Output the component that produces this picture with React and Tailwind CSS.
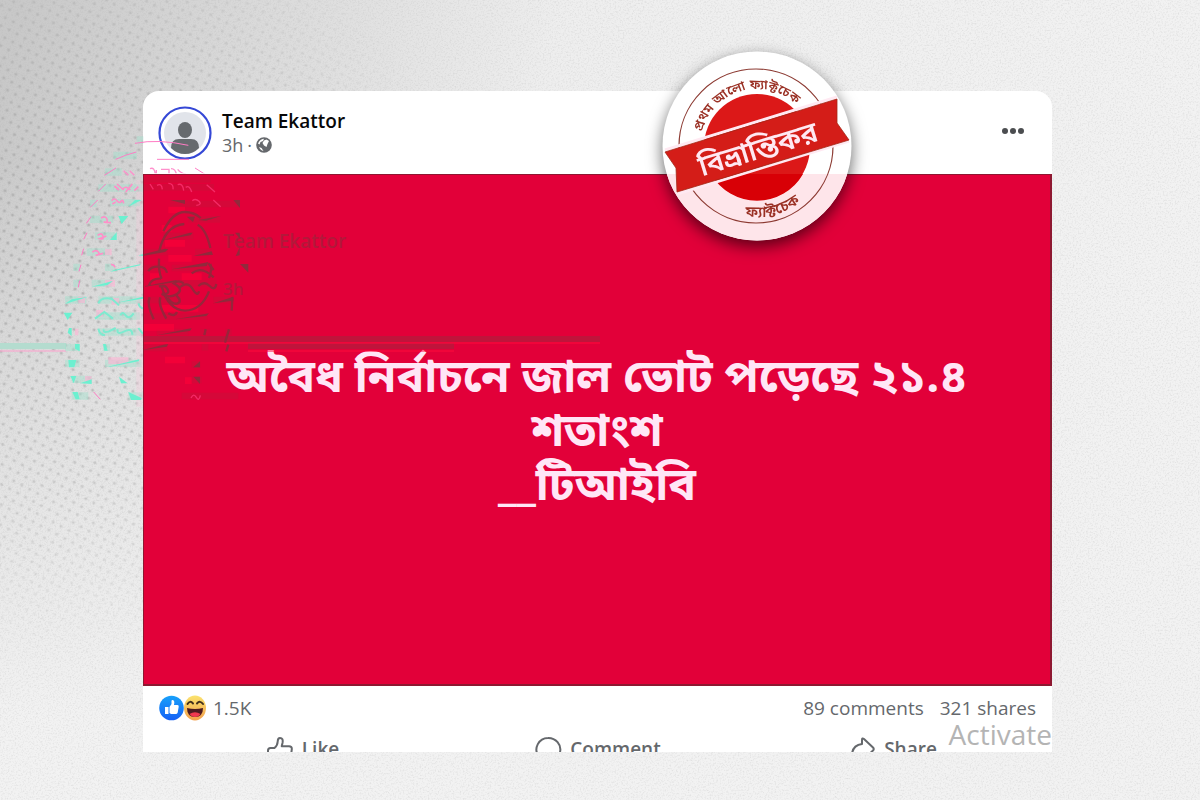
import React from "react";

const RED = "#e20039";

const ACTIONS = [
  { label: "Like", icon: LikeIcon },
  { label: "Comment", icon: CommentIcon },
  { label: "Share", icon: ShareIcon },
];

// slanted ribbon pieces left over from the shifted stamp, as filled wedges
const WEDGES = [
  "M325 330l80-22h8l-6 8-80 14z",
  "M250 376l80-20 10 2-10 8-68 12z",
  "M165 426l12-6 80-18-2 4z",
  "M415 378l55-14 4 10-22 2z",
  "M350 418l100-20 10-2-5 12z",
  "M270 468l95-18-3 6-92 14z",
  "M110 470l65-18-18 14z",
  "M475 520l60-20v12z",
  "M185 518l80-18v6z",
  "M30 522l20-14 50-8z",
  "M360 568l90-16 12-2-8 8z",
  "M305 616l95-20 10-1-5 8z",
  "M265 660l60-16 15-2-5 8z",
  "M158 712l10-4 85-20-2 6z",
  "M75 760l35-12v14z",
  "M220 230l20-20h20z",
  "M430 270l68-12-45 14z",
  "M345 210h45v12z",
  "M535 210h20v24z",
  "M395 260h25l-6 16z",
  "M555 402h25v26z",
  "M415 712l20-18v18z",
  "M415 740h20v22z",
  "M190 258h30l-20 24z",
  "M165 330l20-24v24z",
  "M540 308h14l2 20zM542 378l12-26v24z",
  "M26 548h26l-14 22zM42 594h8v24l-12-10zM60 642h14v22l-14-8zM40 690h24l-6 22H42zM46 738h18l-8 22zM52 786h16l6 22H62z",
  "M150 402l8 22M144 642h8l6 20h-10zM220 786l40 18-2 6h-30zM192 740l26 20h-20z",
];

const CURLS = [
  "M325 304q28-58 64-58 28 0 48 18M312 366q18-80 76-84M428 284q26 14 38 70",
  "M312 386q-2 40 8 60M320 470q20 70 70 72 50-2 72-58M466 402q6 16-4 42",
  "M280 424q6-14 30-14 22 0 26 18M282 466q8-22 36-20M410 430q30-24 66 12M460 400l16 20",
  "M312 470q18-8 26 8t-18 14q24 14 46 0t-10-32q14-12 30 0M370 476q26-26 42 0t20 8M430 468q18-16 34 0t20-6",
  "M284 502q-10 20 12 66M316 502q-8 20 18 64M338 504q16 22 30 16t-4-24M340 550q20 12 26-4",
  "M522 598l-12 40M532 502l-2 40M452 598l-4 18M520 644l-6 20",
];

const SCRIPT_BITS = [
  "M170 212q8-10 16 0t12 2q6-8 8 6M172 222l10-6",
  "M138 264q14-8 18 4t-10 8l22 2",
  "M128 316q12-10 16 2t-10 8l20-8",
  "M112 366q12-8 18 0t-8 10l22-6",
  "M168 404q8-2 12 8",
  "M178 168l14 12M186 162l20 18M204 176q10-10 22 4",
  "M212 186l20-24M238 182l12-12",
];

const MINT_CURLS = [
  "M130 520q8-20 40-14l22 20",
  "M120 566l28-20 26 20M130 596q4 18 20 20M146 598q-2 12 16 6l20-10M188 598q-4 18 20 6t24 10",
  "M196 556q6-14 16 0t24-6M250 520q4 12 14 16M250 594l14 18",
];

function LikeIcon() {
  return (
    <svg viewBox="0 0 28 28" className="h-7 w-7" fill="none" stroke="#65686c" strokeWidth="2" strokeLinejoin="round">
      <path d="M2 15.5q0-2.5 2.500-2.500h4q3-2.500 3.200-6.500.1-3.500 2.300-3.500 3.500 0 2.500 5l-.8 3.200h7.300q3 0 2.800 3l-1 8q-.5 3.800-4 3.800H12q-2.500 0-4.500-1H5q-3 0-3-3z" />
    </svg>
  );
}

function CommentIcon() {
  return (
    <svg viewBox="0 0 28 28" className="h-7 w-7" fill="none" stroke="#65686c" strokeWidth="2" strokeLinejoin="round">
      <path d="M14 3a12 11.500 0 1 1-5 21.800L3 26l1.500-5A11.500 11.500 0 0 1 14 3z" />
    </svg>
  );
}

function ShareIcon() {
  return (
    <svg viewBox="0 0 28 28" className="h-7 w-7" fill="none" stroke="#65686c" strokeWidth="2" strokeLinejoin="round">
      <path d="M14 9V5q0-2.500 2-1l9 8.500q1.500 1.500 0 3l-9 8.500q-2 1.500-2-1v-4q-6 0-10 4Q3 10.500 14 9z" />
    </svg>
  );
}

function Backdrop() {
  return (
    <svg className="absolute inset-0 h-full w-full" aria-hidden="true">
      <defs>
        <linearGradient id="base" x1="0" y1="0.1" x2="1" y2="0.25">
          <stop offset="0" stopColor="#c8c8c8" />
          <stop offset="0.2" stopColor="#dadada" />
          <stop offset="0.45" stopColor="#eeeeee" />
          <stop offset="1" stopColor="#f2f2f2" />
        </linearGradient>
        <linearGradient id="lift" x1="0" y1="0" x2="0" y2="1">
          <stop offset="0.2" stopColor="#f2f2f2" stopOpacity="0" />
          <stop offset="0.9" stopColor="#f2f2f2" stopOpacity="1" />
        </linearGradient>
        <pattern id="dots" width="9" height="9" patternUnits="userSpaceOnUse" patternTransform="rotate(28)">
          <circle cx="4" cy="4" r="1.600" fill="#8c8c8c" />
        </pattern>
        <radialGradient id="fade" gradientUnits="userSpaceOnUse" cx="70" cy="270" r="400">
          <stop offset="0" stopColor="#fff" stopOpacity="0.5" />
          <stop offset="0.6" stopColor="#fff" stopOpacity="0.26" />
          <stop offset="1" stopColor="#fff" stopOpacity="0" />
        </radialGradient>
        <mask id="dotMask">
          <rect width="100%" height="100%" fill="url(#fade)" />
        </mask>
        <filter id="grain" x="0" y="0" width="100%" height="100%">
          <feTurbulence type="fractalNoise" baseFrequency="0.6" numOctaves="2" />
          <feColorMatrix values="0 0 0 0 0.4  0 0 0 0 0.4  0 0 0 0 0.4  1.4 0 0 0 -0.64" />
        </filter>
      </defs>
      <rect width="100%" height="100%" fill="url(#base)" />
      <rect width="100%" height="100%" fill="url(#lift)" />
      <rect width="100%" height="100%" fill="url(#dots)" mask="url(#dotMask)" />
      <rect width="100%" height="100%" filter="url(#grain)" opacity="0.4" />
    </svg>
  );
}

function Avatar() {
  return (
    <svg viewBox="0 0 54 54" className="h-[54px] w-[54px] shrink-0" aria-hidden="true">
      <circle cx="27" cy="27" r="25.500" fill="#fff" stroke="#3548d6" strokeWidth="2.200" />
      <circle cx="27" cy="27" r="21" fill="#e1e4ea" />
      <ellipse cx="27" cy="24" rx="7" ry="8" fill="#666a6e" />
      <path d="M13 42q0-9 8-9h12q8 0 8 9-6 6-14 6t-14-6z" fill="#666a6e" />
    </svg>
  );
}

function Globe() {
  return (
    <svg viewBox="0 0 16 16" className="h-4 w-4" aria-label="Public">
      <circle cx="8" cy="8" r="7.800" fill="#65686c" />
      <path d="M2 6.500Q3.500 2.500 8 1.800L7 4l-2.500 1-1 2.500zM8 3.500l2.500-1L13 4l-1.500 3-1 3L8 8.500 6.500 6zM3 10l2.500 1 2 3Q4.500 13.500 3 10z" fill="#fff" />
    </svg>
  );
}

function Reactions() {
  return (
    <svg viewBox="0 0 48 26" className="h-[26px] w-12" aria-hidden="true">
      <defs>
        <linearGradient id="blue" x1="0" y1="0" x2="0" y2="1">
          <stop offset="0" stopColor="#18a1fa" />
          <stop offset="1" stopColor="#1560f5" />
        </linearGradient>
        <linearGradient id="yellow" x1="0" y1="0" x2="0" y2="1">
          <stop offset="0" stopColor="#fbe36e" />
          <stop offset="1" stopColor="#f3a04c" />
        </linearGradient>
      </defs>
      <ellipse cx="36" cy="13" rx="11" ry="12.500" fill="url(#yellow)" />
      <path d="M28.500 9q2.500-4 5.500-.5M38 8.500q3-3.500 6 .5" fill="none" stroke="#43301c" strokeWidth="2" strokeLinecap="round" />
      <path d="M28 13q8 2 16 0 0 9-8 9t-8-9z" fill="#4b1a20" />
      <path d="M30.500 19q5.500-3.500 11 0-2 3-5.500 3t-5.500-3z" fill="#f0384f" />
      <circle cx="12.500" cy="13" r="12.300" fill="url(#blue)" />
      <path d="M6 12h3.500v7H6zM10.500 12l2-3V6q0-1.200 1.300-1Q16 5.500 15 10h3.500q1.500.3 1.200 1.800l-1 5.700q-.4 1.500-2 1.500h-4.700l-1.500-1z" fill="#fff" />
    </svg>
  );
}

function Stamp() {
  return (
    <svg
      viewBox="0 0 190 190"
      className="absolute -top-10 right-[200px] h-[190px] w-[190px] overflow-visible drop-shadow-[0_6px_8px_rgba(0,0,0,0.6)]"
      fontFamily="'Noto Sans Bengali', 'Noto Sans', sans-serif"
    >
      <defs>
        <path id="arcTop" d="M38 95a57 57 0 0 1 114 0" />
        <path id="arcBottom" d="M25 96a70 70 0 0 0 140 0" />
        <clipPath id="disc">
          <circle cx="95" cy="95" r="94.500" />
        </clipPath>
      </defs>
      <g clipPath="url(#disc)">
        <rect width="190" height="190" fill="#fff" />
        <rect y="123" width="190" height="67" fill="#fee5ea" />
      </g>
      <circle cx="94" cy="95" r="77" fill="none" stroke="#8c3a32" strokeWidth="1.200" />
      <circle cx="95" cy="96" r="53" fill="#dc1818" />
      <path d="M49 123h92a53 53 0 0 1-92 0z" fill="#d80006" />
      <path d="M3 99 175 46M15 143l172-53" fill="none" stroke="#ffe9f2" strokeWidth="3" />
      <path d="M3 101 175 48v24l12 17L15 141l-1-24z" fill="#d41d18" stroke="#a32a18" strokeWidth="0.800" />
      <text fontSize="13" fontWeight="600" fill="#9a3024">
        <textPath href="#arcTop" startOffset="41%" textAnchor="middle">
          প্রথম আলো ফ্যাক্টচেক
        </textPath>
      </text>
      <text fontSize="15" fontWeight="600" fill="#9a3024">
        <textPath href="#arcBottom" startOffset="58%" textAnchor="middle">
          ফ্যাক্টচেক
        </textPath>
      </text>
      <text x="95" y="108" fontSize="29" fontWeight="600" fill="#ffe8f2" textAnchor="middle" transform="rotate(-17 95 95)">
        বিভ্রান্তিকর
      </text>
    </svg>
  );
}

// broken-up copy of the stamp and header; mint and pink on grey, maroon on red
function Ghost() {
  return (
    <svg viewBox="0 0 620 420" className="pointer-events-none absolute left-0 top-0 h-[420px] w-[620px]" aria-hidden="true">
      <path d="M0 346h66" stroke="#b4dccf" strokeWidth="6" />
      <path d="M0 351h66" stroke="#ff9fcd" />
      <path d="M144 339h456M248 346h206" stroke="#bf143b" strokeWidth="6" />
      <path d="M144 343h456M248 351h206" stroke="#ff0b3c" />
      <g fill="#b3183a" fontFamily="'Open Sans', sans-serif" fontWeight="600">
        <text x="223" y="248" fontSize="19">Team Ekattor</text>
        <text x="223" y="295" fontSize="17">3h</text>
      </g>

      <svg x="55" y="130" width="210" height="280" viewBox="0 0 630 840">
        <defs>
          <clipPath id="onGrey">
            <path d="M0 0h264v840H0zM264 0h366v130H264z" />
          </clipPath>
          <clipPath id="onRed">
            <path d="M267 136h363v704H267z" />
          </clipPath>
        </defs>
        <g clipPath="url(#onGrey)" fill="none">
          <path d="M245 30h20M175 76h70M150 126h50M130 174h40M170 174h94M105 220h20M165 218h90M105 268h70M120 318h60M95 366h70M55 412h20M150 412h30M110 460h60M55 460h20M30 510h64M130 510h130M125 558h130M130 606h130M145 652h20M30 652h44M30 700h44M150 700h110M50 748h60M50 798h50M220 798h44" stroke="#9fe0cc" strokeWidth="22" opacity="0.45" />
          <path d="M70 510h20M150 460h30M170 514h22M124 550h20M60 606h10M160 692h60M90 748h20M150 366h20" stroke="#ffb3d3" strokeWidth="20" opacity="0.6" />
          <path d="M254 150v680" stroke="#ffc4dc" strokeWidth="20" opacity="0.25" />
          <path d="M240 40q70-14 160 6M182 88q30-14 62-22M148 136l35-22M130 184l22-22M106 232l22-22M94 280l14-20M86 328l10-20M80 376l6-20M72 424l6-20M70 472l4-20M306 88h96M420 114l35 22M116 786l20 22" stroke="#ff7cc4" strokeWidth="3" />
          <path d="M285 116q14-6 16 18M304 120v16M318 118h24v18M348 116q14 0 16 18M368 118q10 12 24 14M206 122l14 14M224 122l14 14" stroke="#ff8fcc" strokeWidth="4" />
          {SCRIPT_BITS.map((d) => (
            <path key={d} d={d} stroke="#ff8fc8" strokeWidth="5" />
          ))}
          {MINT_CURLS.map((d) => (
            <path key={d} d={d} stroke="#7debd0" strokeWidth="6" />
          ))}
          {WEDGES.map((d) => (
            <path key={d} d={d} fill="#6cf0d0" />
          ))}
        </g>
        <g clipPath="url(#onRed)" fill="none">
          <path d="M267 148h200M267 172h210M345 222h205M400 268h95M325 318h90M267 366h70M420 366h50M267 414h65M350 414h110M300 460h185M267 510h110M475 510h60M267 560h190M305 606h95M435 606h30M510 606h20M267 654h70M440 652h20M410 704h26M410 750h30M380 798h170" stroke="#c5123a" strokeWidth="20" opacity="0.45" />
          <path d="M340 240h50M320 295h30M330 340h60M340 385h70M285 440h30M380 440h60M320 535h110M267 592h90M330 690h60M390 752h20" stroke="#ff0038" strokeWidth="20" opacity="0.6" />
          <path d="M285 162l10 16M306 166q14-8 16 12M340 160q16 0 14 18M368 164q16-6 18 18M392 172q12-8 18 14M412 212q10-8 20 2t-8 12M455 164l25 22M475 210l22 20M408 804q8-16 16-2t12-6" stroke="#f52a66" strokeWidth="4" />
          {CURLS.map((d) => (
            <path key={d} d={d} stroke="#97253b" strokeWidth="7" />
          ))}
          {WEDGES.map((d) => (
            <path key={d} d={d} fill="#8f2a3c" />
          ))}
        </g>
      </svg>
    </svg>
  );
}

export default function App() {
  return (
    <div className="relative min-h-screen overflow-hidden bg-[#efefef] pb-12 pl-[143px] pr-[148px] pt-[91px] font-['Open_Sans','Noto_Sans_Bengali',sans-serif]">
      <Backdrop />
      <article className="relative rounded-t-2xl bg-white">
        <header className="flex h-[83px] items-center gap-2.5 pl-[15px] pr-7">
          <Avatar />
          <div className="min-w-0 flex-1">
            <h1 className="text-[19px] font-semibold leading-6 text-[#080809]">Team Ekattor</h1>
            <div className="flex items-center gap-1 text-lg leading-6 text-[#65686c]">
              <span>3h</span>
              <span>·</span>
              <Globe />
            </div>
          </div>
          <button type="button" aria-label="More" className="flex items-center gap-[2px] pb-1">
            <span className="h-1.5 w-1.5 rounded-full bg-[#4b4d50]" />
            <span className="h-1.5 w-1.5 rounded-full bg-[#4b4d50]" />
            <span className="h-1.5 w-1.5 rounded-full bg-[#4b4d50]" />
          </button>
        </header>

        <div
          className="flex h-[512px] flex-col items-center justify-center border border-b-2 border-r-2 border-[#8e1831] pb-1 text-center text-[46px] font-bold leading-[54px] text-[#ffe6f6]"
          style={{ backgroundColor: RED }}
        >
          <p>অবৈধ নির্বাচনে জাল ভোট পড়েছে ২১.৪</p>
          <p>শতাংশ</p>
          <p>__টিআইবি</p>
        </div>

        <div className="flex h-11 items-center px-4 text-[19px] leading-6 text-[#65686c]">
          <Reactions />
          <span className="ml-1.5">1.5K</span>
          <span className="ml-auto">89 comments</span>
          <span className="ml-4">321 shares</span>
        </div>

        <div className="grid h-[22px] grid-cols-3 overflow-hidden px-3">
          {ACTIONS.map(({ label, icon: Icon }) => (
            <button
              key={label}
              type="button"
              className="flex h-[38px] items-center justify-center gap-2 text-[19px] font-semibold text-[#65686c]"
            >
              <Icon />
              {label}
            </button>
          ))}
        </div>
        <span className="absolute bottom-0 right-0 text-[28px] leading-9 text-[#b4b4b4]">Activate</span>

        <Stamp />
      </article>
      <Ghost />
    </div>
  );
}
